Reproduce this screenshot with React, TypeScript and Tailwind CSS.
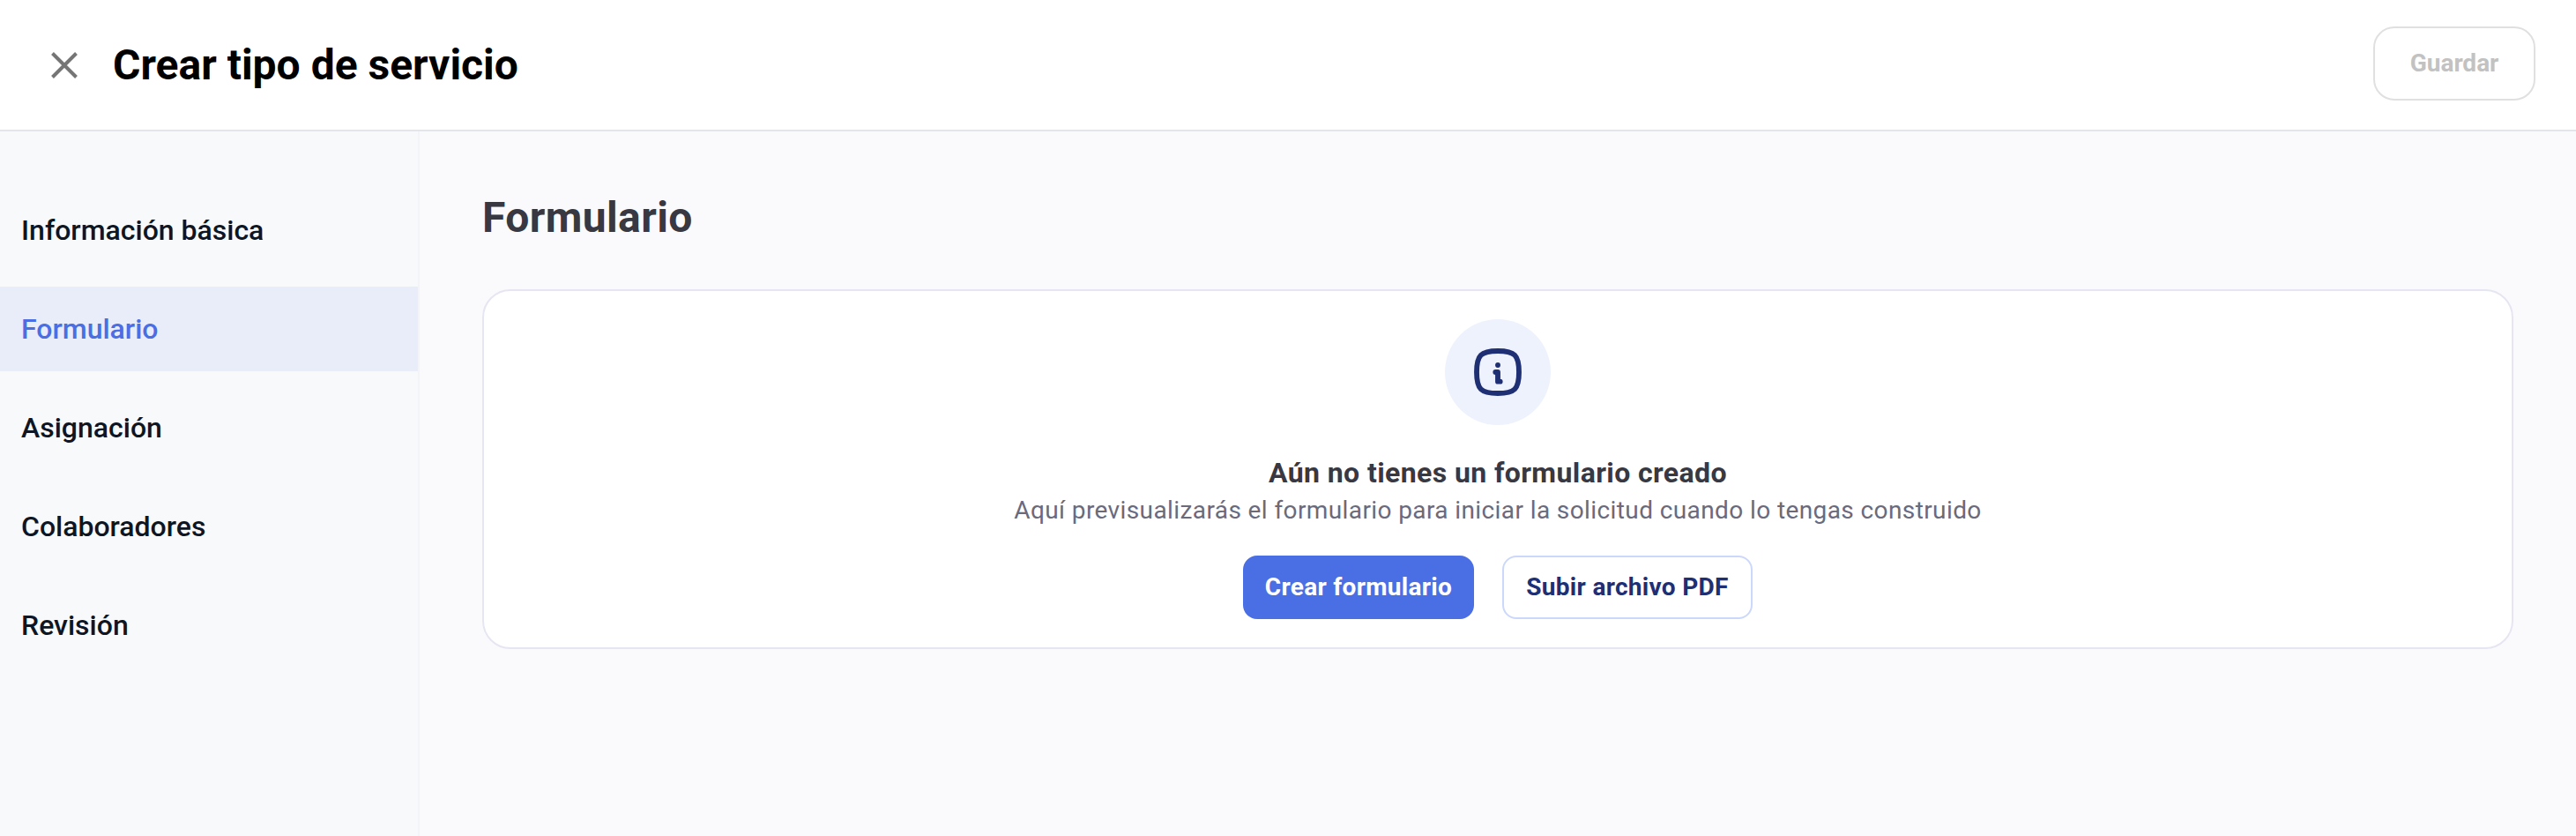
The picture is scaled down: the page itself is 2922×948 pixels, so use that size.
const navItems = ['Información básica', 'Formulario', 'Asignación', 'Colaboradores', 'Revisión'];

export default function App() {
  return (
    <div className="flex h-[948px] w-[2922px] flex-col overflow-hidden bg-white font-['Roboto',sans-serif]">
      <header className="flex h-[149px] shrink-0 items-center justify-between border-b-2 border-[#e3e5ea] bg-white pl-[55px] pr-[46px]">
        <div className="flex items-center gap-[37px]">
          <svg className="h-[36px] w-[36px] text-[#757575]" viewBox="0 0 36 36" fill="none" stroke="currentColor" strokeWidth="4">
            <path d="M4.5 4.5 31.5 31.5M31.5 4.5 4.5 31.5" />
          </svg>
          <h1 className="text-[48px] font-bold leading-[56px] text-black">Crear tipo de servicio</h1>
        </div>
        <button className="mb-[3px] h-[84px] w-[184px] rounded-[24px] border-2 border-[#e0e0e0] bg-white text-[28px] font-bold text-[#c2c2c2]">
          Guardar
        </button>
      </header>

      <div className="flex min-h-0 flex-1">
        <nav className="flex w-[476px] shrink-0 flex-col gap-4 border-r-2 border-[#f3f4f7] bg-[#f8f9fb] pt-[64px]">
          {navItems.map(item => (
            <div
              key={item}
              className={
                item === 'Formulario'
                  ? 'flex h-[96px] items-center bg-[#e9edf9] pl-6 text-[32px] font-medium text-[#4a6ee3]'
                  : 'flex h-[96px] items-center pl-6 text-[32px] font-medium text-[#0f1623]'
              }
            >
              {item}
            </div>
          ))}
        </nav>

        <main className="flex-1 bg-[#fafafc] pl-[71px] pr-[71px] pt-[70px]">
          <h2 className="text-[48px] font-bold leading-[56px] tracking-[0.4px] text-[#383842]">Formulario</h2>
          <section className="mt-[53px] flex h-[408px] flex-col items-center rounded-[32px] border-2 border-[#e6e6f2] bg-white pt-[32px]">
            <div className="flex h-[120px] w-[120px] items-center justify-center rounded-full bg-[#eef2fd]">
              <svg className="h-[64px] w-[64px] text-[#1f2f74]" viewBox="0 0 24 24" fill="none" stroke="currentColor" strokeWidth="2.2" strokeLinecap="round" strokeLinejoin="round">
                <path d="M12 9h.01" />
                <path d="M11 12h1v4h1" />
                <path d="M12 3c7.2 0 9 1.8 9 9s-1.8 9-9 9-9-1.8-9-9 1.8-9 9-9z" />
              </svg>
            </div>
            <h3 className="mt-[34px] text-[32px] font-bold leading-[40px] tracking-[0.4px] text-[#383842]">Aún no tienes un formulario creado</h3>
            <p className="mt-[3px] text-[28px] leading-[40px] tracking-[0.4px] text-[#6a6a7c]">
              Aquí previsualizarás el formulario para iniciar la solicitud cuando lo tengas construido
            </p>
            <div className="mt-[31px] flex gap-8">
              <button className="h-[72px] w-[262px] rounded-[16px] bg-[#4a6ee3] text-[28px] font-bold tracking-[0.3px] text-white">
                Crear formulario
              </button>
              <button className="h-[72px] w-[284px] rounded-[16px] border-2 border-[#ccd8fb] bg-white text-[28px] font-bold tracking-[0.3px] text-[#1f2f74]">
                Subir archivo PDF
              </button>
            </div>
          </section>
        </main>
      </div>
    </div>
  );
}
